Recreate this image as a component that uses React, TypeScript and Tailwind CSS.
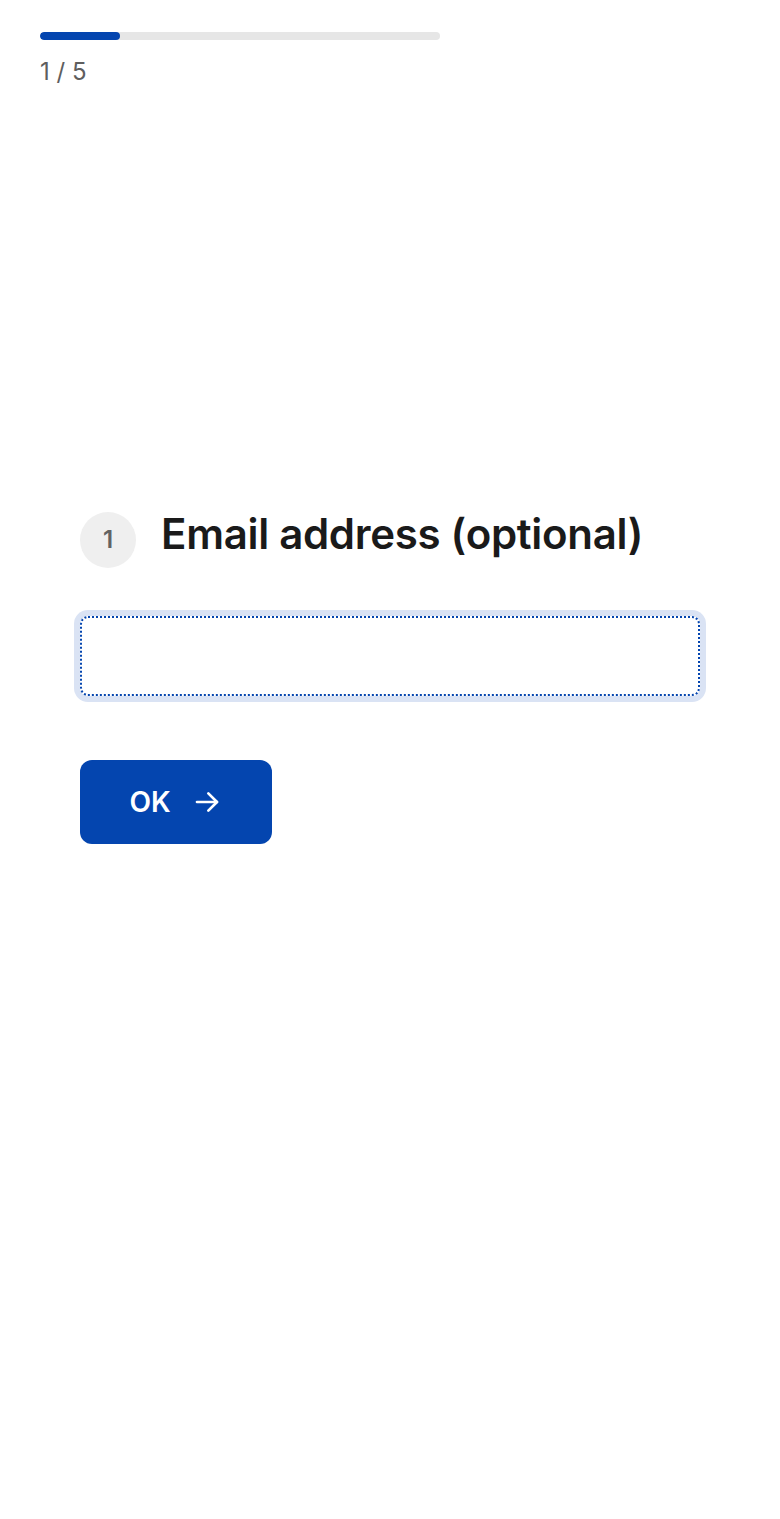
import React from "react";

const ArrowRight = () => (
  <svg width="32" height="32" viewBox="0 0 24 24" fill="none" stroke="currentColor" strokeWidth="2" strokeLinecap="round" strokeLinejoin="round">
    <path d="M4.5 12h15" />
    <path d="M13 5.5l6.5 6.5-6.5 6.5" />
  </svg>
);

const App = () => {
  const step = 1;
  const total = 5;
  return (
    <div className="min-h-[1519px] bg-white font-['Inter',sans-serif]">
      <div className="px-10 pt-8">
        <div className="w-[400px] h-2 rounded-full bg-[#e6e6e6] overflow-hidden">
          <div className="h-full rounded-full bg-[#0445af]" style={{ width: `${(step / total) * 100}%` }} />
        </div>
        <div className="mt-[18px] text-[24px] leading-7 text-[#5e5e5e]">
          {step} / {total}
        </div>
      </div>

      <div className="mt-[426px] px-20">
        <div className="flex items-start gap-[25px]">
          <div className="w-14 h-14 shrink-0 rounded-full bg-[#efefef] flex items-center justify-center text-[24px] font-semibold text-[#626262]">
            1
          </div>
          <h1 className="text-[42px] leading-[44px] font-semibold text-[#1a1a1a] tracking-[-0.3px]">
            Email address (optional)
          </h1>
        </div>

        <div className="mt-[48px] w-[620px] h-20 rounded-lg bg-white outline-2 outline-dotted -outline-offset-2 outline-[#0445af] shadow-[0_0_0_6px_#dae3f4]" />

        <button className="mt-16 w-48 h-[84px] rounded-xl bg-[#0445af] text-white text-[28px] font-semibold flex items-center justify-center gap-[20px]">
          OK
          <ArrowRight />
        </button>
      </div>
    </div>
  );
};

export default App;
